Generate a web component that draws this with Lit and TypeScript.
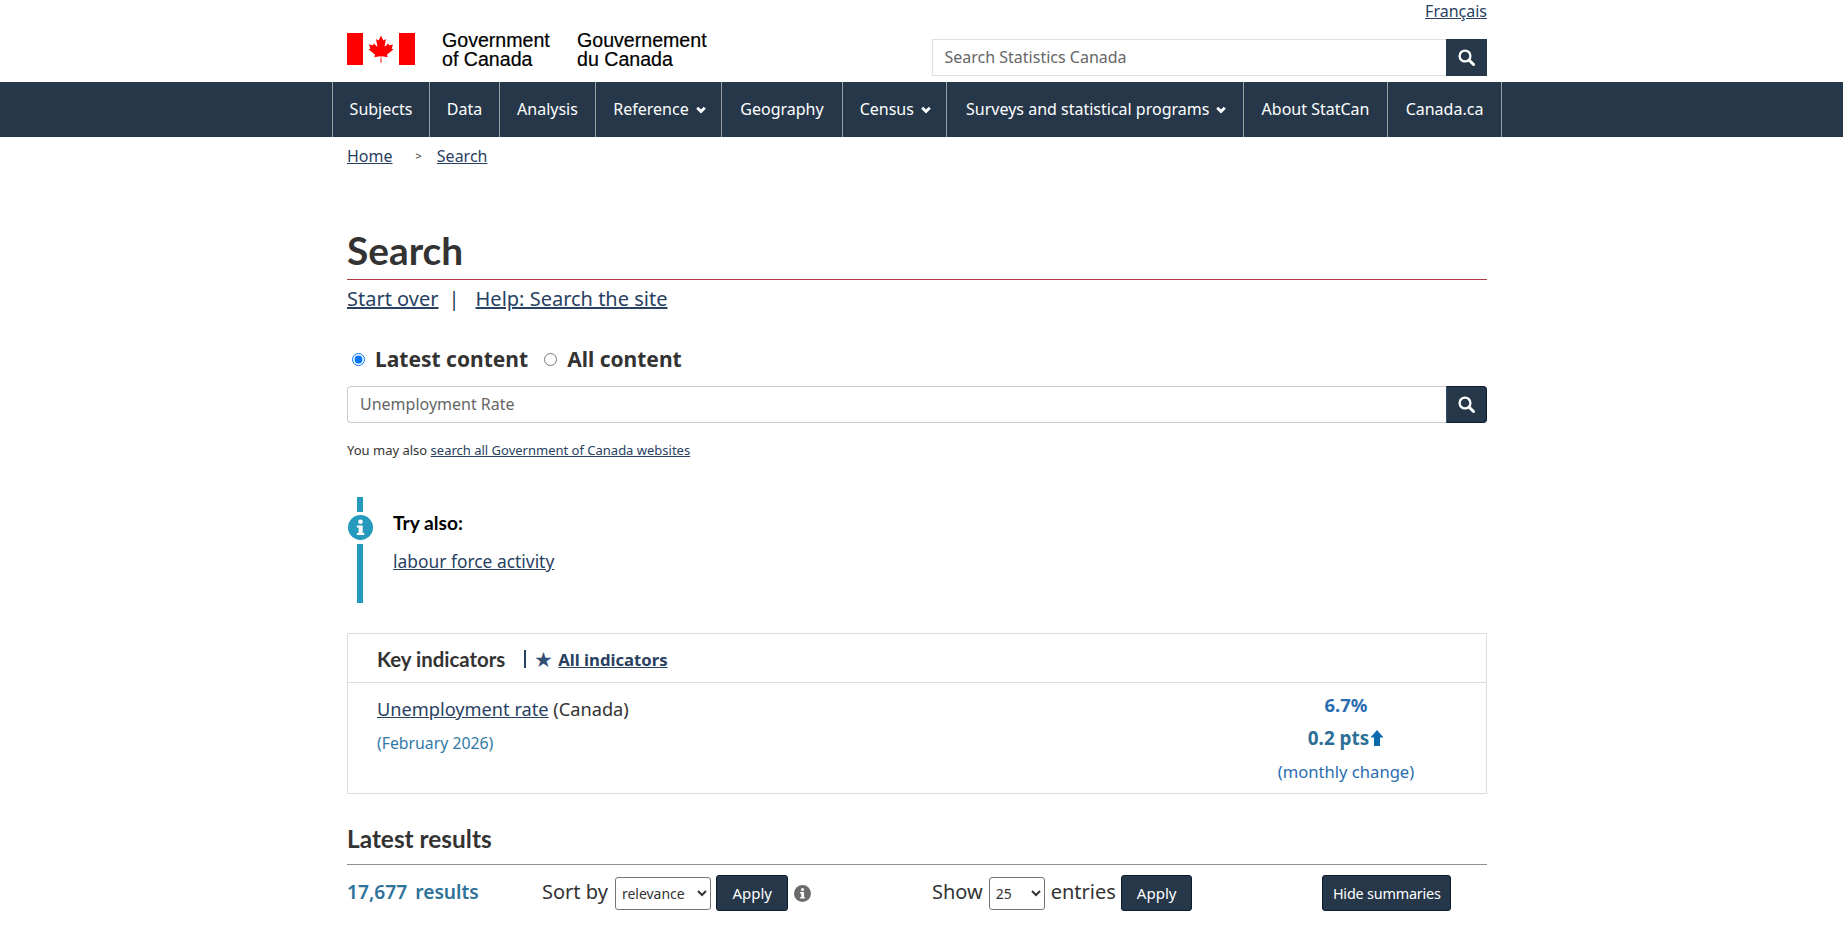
import { LitElement, html, css, svg } from "lit";
import { customElement } from "lit/decorators.js";

const LEAF = "M4890 4430l-45-863a95 95 0 0 1 111-98l859 151-116-320a65 65 0 0 1 20-73l941-762-212-99a65 65 0 0 1-34-79l186-572-542 115a65 65 0 0 1-73-38l-105-247-423 454a65 65 0 0 1-111-57l204-1052-327 189a65 65 0 0 1-91-27l-332-652-332 652a65 65 0 0 1-91 27l-327-189 204 1052a65 65 0 0 1-111 57l-423-454-105 247a65 65 0 0 1-73 38l-542-115 186 572a65 65 0 0 1-34 79l-212 99 941 762a65 65 0 0 1 20 73l-116 320 859-151a95 95 0 0 1 111 98l-45 863z";

const flag = html`<svg class="flag" viewBox="0 0 68 32" aria-hidden="true">
  <rect x="0" y="0" width="16" height="32" fill="#f00"></rect>
  <rect x="52" y="0" width="16" height="32" fill="#f00"></rect>
  <g transform="translate(34 0) scale(0.006667) translate(-4800 0)"><path fill="#f00" d="${LEAF}"></path></g>
</svg>`;

const searchIcon = html`<svg class="sicon" viewBox="0 0 16 16" aria-hidden="true">
  <circle cx="6.6" cy="6.6" r="5.1" fill="none" stroke="#fff" stroke-width="2.2"></circle>
  <path d="M10.6 10.6L14.6 14.6" stroke="#fff" stroke-width="2.8" stroke-linecap="round"></path>
</svg>`;

const chevron = html`<svg class="chev" viewBox="0 0 10 8" aria-hidden="true"><path d="M1.2 1.8L5 5.6 8.8 1.8" fill="none" stroke="#fff" stroke-width="2.8"></path></svg>`;

const infoDisc = (bg: string) => svg`<circle cx="12" cy="12" r="12" fill="${bg}"></circle>
  <circle cx="12" cy="6.4" r="2.2" fill="#fff"></circle>
  <path d="M8.5 10h5.6v7.2h1.6v2H8.5v-2h1.7v-5.2H8.5z" fill="#fff"></path>`;

@customElement("app-root")
export class AppRoot extends LitElement {
  static styles = css`
    :host { display: block; font-family: "Noto Sans", sans-serif; color: #333; background: #fff; height: 934px; overflow: hidden; }
    a { color: #284162; text-decoration: underline; }
    .wrap { width: 1140px; margin-left: 347px; }
    .lang { height: 39px; display: flex; justify-content: flex-end; font-size: 16px; line-height: 22px; }
    .top { display: flex; justify-content: space-between; height: 43px; }
    .brand { display: flex; margin-top: -6px; height: 32px; }
    .flag { width: 68px; height: 32px; display: block; }
    .sig { font-family: "Liberation Sans", Arial, sans-serif; color: #000; font-size: 19.6px; line-height: 19px; margin-top: -2px; -webkit-text-stroke: 0.2px #000; }
    .sig.en { margin-left: 27px; width: 135px; }
    .search { display: flex; width: 555px; height: 37px; }
    .search .in { flex: 1; border: 1px solid #e0e0e0; border-right: 0; padding-left: 11.5px; font-size: 16px; line-height: 35px; color: #666; }
    .sbtn { width: 41px; background: #26374a; display: flex; align-items: center; justify-content: center; box-sizing: border-box; }
    .sicon { width: 17px; height: 17px; display: block; }
    .navbar { height: 55px; background: #26374a; }
    .nav { margin-left: 332px; display: flex; height: 55px; width: max-content; border-left: 1px solid #9a9fa6; }
    .nav a { color: #fff; text-decoration: none; font-size: 16px; display: flex; align-items: center; justify-content: center; gap: 7px; padding: 0 0 2px; border-right: 1px solid #9a9fa6; box-sizing: border-box; }
    .nav a.drop { padding-left: 2px; }
    .nav a.wide { padding-left: 3px; }
    .chev { width: 10px; height: 8px; display: block; margin-top: 2px; }
    .crumbs { display: flex; font-size: 16px; line-height: 22px; padding-top: 8px; height: 30px; box-sizing: content-box; }
    .crumbs .sep { font-size: 11px; margin: 0 15px 0 23px; color: #333; }
    h1 { font-family: Lato, sans-serif; font-weight: 700; font-size: 38.8px; line-height: 44px; margin: 53px 0 0; padding-bottom: 7px; border-bottom: 1px solid #af3c43; color: #333; }
    .help { display: flex; align-items: center; font-size: 20px; line-height: 28px; margin-top: 5px; }
    .help .bar { color: #284162; margin: 0 16px 0 10px; }
    .radios { display: flex; align-items: center; margin: 32px 0 0 5px; font-size: 21px; font-weight: 700; line-height: 28px; height: 28px; }
    .radios input { margin: 0 10px 0 0; width: 13px; height: 13px; }
    .radios label { display: flex; align-items: center; margin-right: 16px; }
    .query { display: flex; height: 37px; margin-top: 13px; }
    .query .in { flex: 1; border: 1px solid #ccc; border-right: 0; border-radius: 4px 0 0 4px; padding-left: 12px; font-size: 16px; line-height: 35px; color: #666; }
    .query .sbtn { border-radius: 0 4px 4px 0; border: 1px solid #091c2d; border-left-color: #335075; }
    .also { font-size: 13px; line-height: 18px; margin-top: 18px; }
    .alert { display: flex; margin-top: 38px; height: 106px; }
    .rail { width: 26px; display: flex; flex-direction: column; align-items: center; margin-right: 20px; }
    .rail i { width: 6px; background: #269abc; display: block; }
    .rail svg { width: 25px; height: 25px; display: block; margin: 3px 0 4px; }
    .alert .t { font-family: Lato, sans-serif; font-weight: 700; color: #000; font-size: 19.2px; line-height: 26px; margin-top: 13px; }
    .alert .l { font-size: 17.4px; line-height: 24px; margin-top: 13px; }
    .box { border: 1px solid #ddd; margin-top: 30px; height: 159px; }
    .boxh { height: 48px; border-bottom: 1px solid #ddd; padding-left: 29px; display: flex; align-items: center; }
    .boxh .k { font-family: Lato, sans-serif; font-weight: 700; font-size: 20.4px; margin-top: 2px; }
    .boxh .pipe { width: 2px; height: 18px; background: #284162; margin: 1px 8px 0 19px; }
    .boxh .star { color: #335075; font-size: 21px; line-height: 20px; margin: 1px 5px 0 0; }
    .boxh a { font-weight: 700; font-size: 16.7px; margin-top: 3px; }
    .boxb { display: flex; justify-content: space-between; padding: 13px 0 0 29px; }
    .boxb .name { font-size: 18.2px; line-height: 26px; }
    .boxb .date { font-size: 15.8px; line-height: 22px; color: #2f7aa6; margin-top: 10px; }
    .val { width: 280px; text-align: center; color: #2a6db0; }
    .val div { display: flex; justify-content: center; align-items: center; }
    .val .a { font-size: 18.5px; font-weight: 700; line-height: 24px; margin-top: -3px; }
    .val .b { font-size: 18.9px; font-weight: 700; line-height: 26px; color: #2d6f96; margin-top: 8px; }
    .val .b svg { width: 14px; height: 18px; display: block; margin-left: 1px; }
    .val .c { font-size: 16.6px; line-height: 22px; margin-top: 10px; }
    h2 { font-family: Lato, sans-serif; font-weight: 700; font-size: 24.4px; line-height: 30px; margin: 30px 0 0; padding-bottom: 10px; border-bottom: 1px solid #909090; color: #333; }
    .ctl { display: flex; align-items: center; height: 38px; margin-top: 9px; font-size: 20px; }
    .ctl .lbl, .count { padding-bottom: 3px; }
    .count { font-weight: 600; color: #2f7299; width: 195px; font-size: 19.2px; }
    .count b { font-weight: 600; margin-right: 8px; }
    select { font-family: "Noto Sans", sans-serif; font-size: 14px; color: #333; height: 33px; background: #fff; border: 1px solid #767676; border-radius: 3px; margin: 0 6px; padding: 0 0 0 2px; }
    .sel1 { width: 96.5px; margin: 0 5px 0 7px; }
    .sel2 { width: 56px; }
    button { font-family: "Noto Sans", sans-serif; font-size: 15px; background: #26374a; color: #fff; border: 1px solid #091c2d; border-radius: 3px; height: 36px; padding: 0 15px; }
    .inf { width: 17px; height: 17px; display: block; margin: 0 0 0 6px; }
    .g2 { display: flex; align-items: center; margin-left: 121px; }
    .hide { margin-left: 130px; padding: 0 9.5px; font-size: 14.4px; letter-spacing: -0.2px; }
  `;

  render() {
    const items: [string, number, boolean][] = [
      ["Subjects", 97, false], ["Data", 70, false], ["Analysis", 96, false], ["Reference", 126, true], ["Geography", 121, false],
      ["Census", 103.5, true], ["Surveys and statistical programs", 297.5, true], ["About StatCan", 144, false], ["Canada.ca", 114, false],
    ];
    return html`
      <div class="wrap">
        <div class="lang"><a href="#">Français</a></div>
        <div class="top">
          <div class="brand">
            ${flag}
            <div class="sig en">Government<br />of Canada</div>
            <div class="sig fr">Gouvernement<br />du Canada</div>
          </div>
          <div class="search"><div class="in">Search Statistics Canada</div><div class="sbtn">${searchIcon}</div></div>
        </div>
      </div>
      <div class="navbar"><div class="nav">
        ${items.map(([t, w, c]) => html`<a href="#" style="width:${w}px" class="${t.startsWith("Surveys") ? "wide" : c ? "drop" : ""}">${t}${c ? chevron : ""}</a>`)}
      </div></div>
      <div class="wrap">
        <div class="crumbs"><a href="#">Home</a><span class="sep">&gt;</span><a href="#">Search</a></div>
        <h1>Search</h1>
        <div class="help"><a href="#">Start over</a><span class="bar">|</span><a href="#">Help: Search the site</a></div>
        <div class="radios">
          <label><input type="radio" name="c" checked />Latest content</label>
          <label><input type="radio" name="c" />All content</label>
        </div>
        <div class="query"><div class="in">Unemployment Rate</div><div class="sbtn">${searchIcon}</div></div>
        <div class="also">You may also <a href="#">search all Government of Canada websites</a></div>
        <div class="alert">
          <div class="rail">
            <i style="height:15px"></i>
            <svg viewBox="0 0 24 24" aria-hidden="true">${infoDisc("#269abc")}</svg>
            <i style="flex:1"></i>
          </div>
          <div>
            <div class="t">Try also:</div>
            <div class="l"><a href="#">labour force activity</a></div>
          </div>
        </div>
        <div class="box">
          <div class="boxh">
            <span class="k">Key indicators</span><span class="pipe"></span><span class="star">★</span><a href="#">All indicators</a>
          </div>
          <div class="boxb">
            <div>
              <div class="name"><a href="#">Unemployment rate</a> (Canada)</div>
              <div class="date">(February 2026)</div>
            </div>
            <div class="val">
              <div class="a">6.7%</div>
              <div class="b">0.2 pts<svg viewBox="0 0 14 18" aria-hidden="true"><path d="M7 1L13.5 8.5H10V17H4V8.5H.5z" fill="#0b69b0"></path></svg></div>
              <div class="c">(monthly change)</div>
            </div>
          </div>
        </div>
        <h2>Latest results</h2>
        <div class="ctl">
          <div class="count"><b>17,677</b>results</div>
          <span class="lbl">Sort by</span>
          <select class="sel1"><option>relevance</option></select>
          <button>Apply</button>
          <svg class="inf" viewBox="0 0 24 24" aria-hidden="true">${infoDisc("#6b6b6b")}</svg>
          <div class="g2">
            <span class="lbl">Show</span>
            <select class="sel2"><option>25</option></select>
            <span class="lbl">entries</span>
            <button style="margin-left:5px">Apply</button>
          </div>
          <button class="hide">Hide summaries</button>
        </div>
      </div>
    `;
  }
}
